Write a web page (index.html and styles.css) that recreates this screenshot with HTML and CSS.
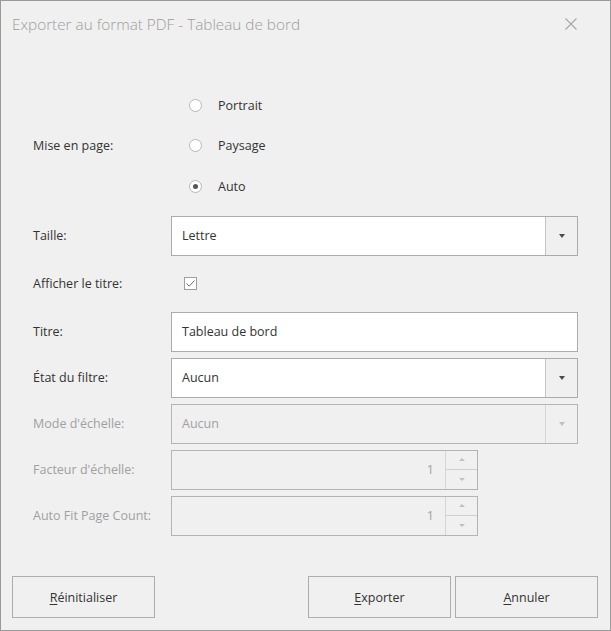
FILE: index.html
```html
<!DOCTYPE html>
<html lang="fr">
<head>
<meta charset="utf-8">
<link rel="stylesheet" href="styles.css">
</head>
<body>
<div class="window">
  <div class="titlebar">
    <span class="title">Exporter au format PDF - Tableau de bord</span>
    <span class="close">
      <svg width="12" height="12" viewBox="0 0 12 12"><path d="M0.5 0.5 L11.5 11.5 M11.5 0.5 L0.5 11.5" stroke="#a6a6a6" stroke-width="1.1" fill="none"/></svg>
    </span>
  </div>
  <div class="form">
    <div class="row radio-row">
      <div class="label">Mise en page:</div>
      <div class="radios">
        <label class="radio"><span class="circle"></span><span>Portrait</span></label>
        <label class="radio"><span class="circle"></span><span>Paysage</span></label>
        <label class="radio"><span class="circle checked"></span><span>Auto</span></label>
      </div>
    </div>
    <div class="row box-row">
      <div class="label">Taille:</div>
      <div class="combo">
        <span class="value">Lettre</span>
        <span class="drop"><span class="arrow"></span></span>
      </div>
    </div>
    <div class="row check-row">
      <div class="label">Afficher le titre:</div>
      <div class="checkbox">
        <svg width="11" height="11" viewBox="0 0 11 11"><path d="M1.5 5.5 L4.2 8.2 L9.5 2.5" stroke="#6e6e6e" stroke-width="1" fill="none"/></svg>
      </div>
    </div>
    <div class="row box-row">
      <div class="label">Titre:</div>
      <div class="textbox"><span class="value">Tableau de bord</span></div>
    </div>
    <div class="row box-row">
      <div class="label">État du filtre:</div>
      <div class="combo">
        <span class="value">Aucun</span>
        <span class="drop"><span class="arrow"></span></span>
      </div>
    </div>
    <div class="row box-row disabled">
      <div class="label">Mode d'échelle:</div>
      <div class="combo">
        <span class="value">Aucun</span>
        <span class="drop"><span class="arrow"></span></span>
      </div>
    </div>
    <div class="row box-row disabled">
      <div class="label">Facteur d'échelle:</div>
      <div class="spin">
        <span class="value">1</span>
        <span class="spin-btns"><span class="up"><span class="arrow-up"></span></span><span class="down"><span class="arrow"></span></span></span>
      </div>
    </div>
    <div class="row box-row disabled">
      <div class="label">Auto Fit Page Count:</div>
      <div class="spin">
        <span class="value">1</span>
        <span class="spin-btns"><span class="up"><span class="arrow-up"></span></span><span class="down"><span class="arrow"></span></span></span>
      </div>
    </div>
  </div>
  <div class="buttons">
    <button class="btn"><u>R</u>éinitialiser</button>
    <div class="right-btns">
      <button class="btn"><u>E</u>xporter</button>
      <button class="btn"><u>A</u>nnuler</button>
    </div>
  </div>
</div>
</body>
</html>
```
FILE: styles.css
```css
html, body {
  margin: 0;
  padding: 0;
  background: #f0f0f0;
}
.window {
  width: 611px;
  height: 631px;
  box-sizing: border-box;
  border: 1px solid #9a9a9a;
  background: #f0f0f0;
  font-family: "Open Sans", "Noto Sans", sans-serif;
  font-size: 12.5px;
  color: #333;
  display: flex;
  flex-direction: column;
}
.titlebar {
  height: 47px;
  display: flex;
  align-items: center;
  justify-content: space-between;
  padding: 0 33px 0 11px;
  flex-shrink: 0;
}
.title {
  font-size: 15.3px;
  font-weight: 300;
  color: #9d9d9d;
  margin-top: -1px;
}
.close {
  display: flex;
  margin-top: -1px;
}
.form {
  padding: 37px 0 0 32px;
  display: flex;
  flex-direction: column;
}
.row {
  display: grid;
  grid-template-columns: 138px 407px;
  align-items: center;
}
.label {
  white-space: nowrap;
}
.radio-row {
  margin-bottom: 9px;
}
.radios {
  display: flex;
  flex-direction: column;
}
.radio {
  height: 40.5px;
  display: flex;
  align-items: center;
  padding-left: 18px;
}
.circle {
  width: 11px;
  height: 11px;
  border: 1px solid #b8b8b8;
  border-radius: 50%;
  background: #fff;
  margin-right: 16px;
  position: relative;
  flex-shrink: 0;
}
.circle.checked::after {
  content: "";
  position: absolute;
  left: 3px;
  top: 3px;
  width: 5px;
  height: 5px;
  border-radius: 50%;
  background: #555;
}
.box-row {
  margin-bottom: 6px;
}
.combo, .textbox, .spin {
  height: 40px;
  box-sizing: border-box;
  border: 1px solid #ababab;
  background: #fff;
  display: flex;
  align-items: center;
}
.value {
  padding-left: 10px;
  flex: 1;
  color: #333;
}
.drop {
  width: 31px;
  height: 100%;
  border-left: 1px solid #c4c4c4;
  background: #f0f0f0;
  display: flex;
  align-items: center;
  justify-content: center;
}
.arrow {
  width: 0;
  height: 0;
  border-left: 3.5px solid transparent;
  border-right: 3.5px solid transparent;
  border-top: 4px solid #4a4a4a;
}
.arrow-up {
  width: 0;
  height: 0;
  border-left: 3.5px solid transparent;
  border-right: 3.5px solid transparent;
  border-bottom: 4px solid #4a4a4a;
}
.check-row {
  height: 56px;
  margin-top: -6px;
}
.checkbox {
  width: 11px;
  height: 11px;
  border: 1px solid #9e9e9e;
  background: #fff;
  margin-left: 13px;
  display: flex;
}
.disabled .label,
.disabled .value {
  color: #a0a0a0;
}
.disabled .combo,
.disabled .spin {
  background: #f0f0f0;
  border-color: #b4b4b4;
}
.disabled .drop {
  border-left-color: #d6d6d6;
}
.disabled .arrow {
  border-top-color: #c0c0c0;
}
.disabled .arrow-up {
  border-bottom-color: #c0c0c0;
}
.spin {
  width: 307px;
}
.spin .value {
  text-align: right;
  padding-right: 11px;
  padding-left: 0;
}
.spin-btns {
  width: 31px;
  height: 100%;
  border-left: 1px solid #d6d6d6;
  display: flex;
  flex-direction: column;
}
.spin-btns .up, .spin-btns .down {
  flex: 1;
  display: flex;
  align-items: center;
  justify-content: center;
}
.spin-btns .up {
  border-bottom: 1px solid #cfcfcf;
}
.spin-btns .arrow-up {
  border-left-width: 3px;
  border-right-width: 3px;
  border-bottom-width: 3px;
}
.spin-btns .arrow {
  border-left-width: 3px;
  border-right-width: 3px;
  border-top-width: 3px;
}
.buttons {
  margin-top: auto;
  padding: 0 12px 12px 11px;
  display: flex;
  justify-content: space-between;
}
.right-btns {
  display: flex;
  gap: 4px;
}
.btn {
  width: 143px;
  height: 42px;
  box-sizing: border-box;
  border: 1px solid #adadad;
  background: #f0f0f0;
  font-family: "Open Sans", "Noto Sans", sans-serif;
  font-size: 12.5px;
  color: #333;
  padding: 0;
}
.btn u {
  text-decoration-thickness: 1px;
  text-underline-offset: 2px;
}
```
